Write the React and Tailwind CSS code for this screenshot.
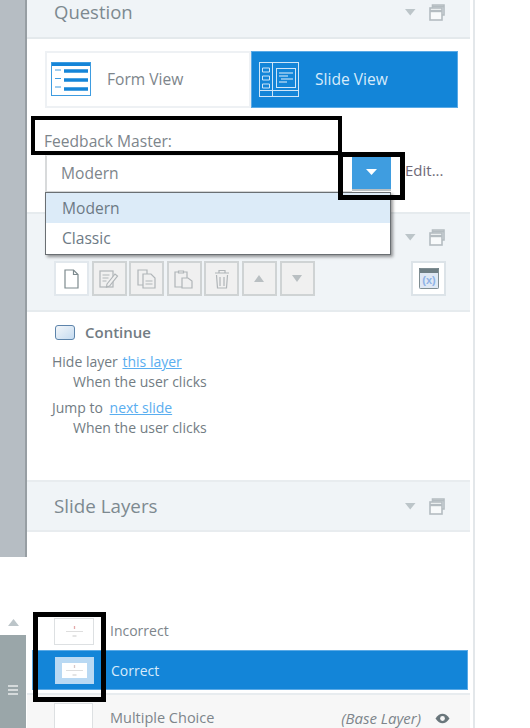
const font = { fontFamily: '"Open Sans", "Noto Sans", sans-serif' };

function HeaderIcons() {
  return (
    <div className="flex items-center gap-[13px]">
      <svg width="11" height="7" viewBox="0 0 11 7"><path d="M0 0h10.5L5.2 6.5z" fill="#bcc5c9" /></svg>
      <svg width="16" height="17" viewBox="0 0 16 17" fill="none" stroke="#b4bcc1" strokeWidth="1.6">
        <path d="M3.5 4V1h11.5v10H13" />
        <rect x="1" y="4" width="12" height="12" fill="#f8fafb" />
        <path d="M1 7h12" strokeWidth="2.4" />
        <path d="M3.5 2.5h11.5" strokeWidth="2" />
      </svg>
    </div>
  );
}

function FormIcon() {
  return (
    <svg width="41" height="35" viewBox="0 0 41 35" fill="none">
      <rect x="0.5" y="0.5" width="39" height="33" stroke="#3e9ce0" fill="#fff" />
      <rect x="1" y="1" width="38" height="3" fill="#1585d8" />
      <path d="M4 8h6M4 16.5h6M4 25h6" stroke="#3e9ce0" strokeWidth="1" />
      <path d="M13 9h24M13 18h24M13 27h24" stroke="#1585d8" strokeWidth="3.4" />
    </svg>
  );
}

function SlideIcon() {
  return (
    <svg width="41" height="35" viewBox="0 0 41 35" fill="none" stroke="#cfe6f8" strokeWidth="1">
      <rect x="0.5" y="0.5" width="39" height="34" />
      <path d="M13.5 0.5v34M0.5 28.5h39" />
      <path d="M3.5 6h7v4h-7zM3.5 14h7v4h-7zM3.5 22h7v4h-7z" />
      <rect x="17.5" y="6.5" width="19" height="19" />
      <path d="M20 11h14M20 14h9M22 17h12M20 20h8" stroke="#e6f2fc" />
    </svg>
  );
}

function ToolBtn({ children, white }) {
  return (
    <div className={`w-[35px] h-[35px] flex items-center justify-center border-2 ${white ? 'bg-white border-[#e2e8ed]' : 'bg-[#f0f0f0] border-[#cfd3d4]'}`}>
      {children}
    </div>
  );
}

const Stroke = { fill: 'none', stroke: '#b0b5b8', strokeWidth: 1.2 };

function ThumbArt({ active }) {
  return (
    <svg width="25" height="15" viewBox="0 0 25 15">
      <rect width="25" height="15" fill={active ? '#fff' : 'transparent'} />
      <path d="M4 7.5h17" stroke="#dedede" strokeWidth="1" />
      <path d="M12.5 2v3" stroke={active ? '#d8c7c7' : '#e3a9a9'} strokeWidth="1.3" />
      <path d="M10.5 12h4" stroke="#d6d6d6" strokeWidth="1.3" />
    </svg>
  );
}

export default function App() {
  return (
    <div style={font} className="w-[530px] h-[728px] overflow-hidden bg-white flex relative text-[#69757d]">
      {/* left rail */}
      <div className="w-[27px] h-full flex flex-col shrink-0">
        <div className="h-[557px] shrink-0 bg-[#b6bdc3] border-r-2 border-[#979ea3]" />
        <div className="h-[53px] shrink-0 bg-white" />
        <div className="h-[25px] shrink-0 w-[26px] bg-white flex items-center justify-center">
          <svg width="11" height="7" viewBox="0 0 11 7"><path d="M5.5 0L11 7H0z" fill="#bcc5c9" /></svg>
        </div>
        <div className="flex-1 w-[26px] bg-[#9aa6a9] flex items-center justify-center">
          <div className="flex flex-col gap-[2px] mb-[-16px]">
            <div className="w-[10px] h-[2px] bg-[#d5dadb]" />
            <div className="w-[10px] h-[2px] bg-[#d5dadb]" />
            <div className="w-[10px] h-[2px] bg-[#d5dadb]" />
          </div>
        </div>
      </div>

      {/* main panel */}
      <div className="w-[443px] h-full flex flex-col shrink-0">
        <div className="h-[39px] shrink-0 bg-[#f0f4f7] border-b-2 border-[#e4e9ec] flex items-start justify-between pl-[27px] pr-[25px]">
          <span className="text-[18.5px] leading-[24px] text-[#7d8990]">Question</span>
          <div className="pt-[4px]"><HeaderIcons /></div>
        </div>

        <div className="h-[173px] shrink-0 flex flex-col pl-[18px] pr-[12px] pt-[12px]">
          <div className="flex h-[57px] w-[413px] shrink-0">
            <div className="w-[206px] border-2 border-[#eef1f4] flex items-center pl-[4px] gap-[15px]">
              <FormIcon />
              <span className="text-[15.6px] text-[#7d858b]">Form View</span>
            </div>
            <div className="w-[207px] bg-[#1385d8] border border-[#5aaae6] flex items-center pl-[7px] gap-[15px]">
              <SlideIcon />
              <span className="text-[15.6px] text-[#d7ebfb]">Slide View</span>
            </div>
          </div>
          <div className="text-[15.6px] leading-[20px] text-[#7d858b] mt-[23px] -ml-[1px]">Feedback Master:</div>
          <div className="flex mt-[4px] h-[38px] items-start shrink-0">
            <div className="w-[307px] h-[38px] bg-white border-l-2 border-b-2 border-t border-[#d8dadb] border-t-[#eef0f1] pl-[14px] text-[15.6px] leading-[34px] text-[#7d858b]">Modern</div>
            <div className="w-[39px] h-[36px] bg-[#3f9de0] border-b-2 border-[#b9c0c4] flex items-center justify-center">
              <svg width="11" height="6" viewBox="0 0 11 6"><path d="M0 0h11L5.5 6z" fill="#fff" /></svg>
            </div>
            <span className="ml-[14px] text-[15px] leading-[30px] text-[#6f6a78]">Edit...</span>
          </div>
        </div>

        {/* trigger toolbar */}
        <div className="h-[100px] shrink-0 bg-[#f0f4f7] border-y-2 border-[#e6ebee] flex flex-col px-[27px]">
          <div className="flex justify-end pt-[15px] -mr-[2px]"><HeaderIcons /></div>
          <div className="flex items-center justify-between mt-[15px] -mr-[3px]">
            <div className="flex gap-[2.6px]">
              <ToolBtn white>
                <svg width="15" height="20" viewBox="0 0 15 20" fill="#fff" stroke="#7d8a8e" strokeWidth="1.2"><path d="M1 1h8.5L14 5.5V19H1z" /><path d="M9.5 1v4.5H14" fill="none" /></svg>
              </ToolBtn>
              <ToolBtn>
                <svg width="20" height="20" viewBox="0 0 20 20" {...Stroke}><rect x="1" y="2" width="13" height="16" /><path d="M3.5 6h7M3.5 9h6M3.5 12h4" /><path d="M8 15l8-10 2.5 2-8 10-3 1z" fill="#f0f0f0" /></svg>
              </ToolBtn>
              <ToolBtn>
                <svg width="20" height="20" viewBox="0 0 20 20" {...Stroke}><path d="M1 1h9v15H1z" /><path d="M6 5h8l4 4v10H6z" fill="#f0f0f0" /><path d="M8.5 12h7M8.5 15h7" /></svg>
              </ToolBtn>
              <ToolBtn>
                <svg width="20" height="20" viewBox="0 0 20 20" {...Stroke}><path d="M1 3h12v15H1z" /><path d="M4.5 4V2h5v2z" fill="#f0f0f0" /><path d="M8 9h6l4 3v7H8z" fill="#f0f0f0" /></svg>
              </ToolBtn>
              <ToolBtn>
                <svg width="18" height="20" viewBox="0 0 18 20" {...Stroke}><path d="M2 4h14M6 4V1.5h6V4" /><path d="M3.5 6l1 13h9l1-13" /><path d="M7 8v9M11 8v9" /></svg>
              </ToolBtn>
              <ToolBtn>
                <svg width="10" height="7" viewBox="0 0 10 7"><path d="M5 0l5 7H0z" fill="#b9bfc2" /></svg>
              </ToolBtn>
              <ToolBtn>
                <svg width="10" height="7" viewBox="0 0 10 7"><path d="M0 0h10L5 7z" fill="#b9bfc2" /></svg>
              </ToolBtn>
            </div>
            <div className="w-[35px] h-[35px] bg-white border-2 border-[#dce3e8] flex items-center justify-center">
              <svg width="20" height="21" viewBox="0 0 20 21">
                <rect width="20" height="21" rx="1" fill="#dfe8f4" />
                <rect width="20" height="5" fill="#6e7e84" />
                <rect x="0.5" y="0.5" width="19" height="20" rx="1" fill="none" stroke="#7f8d92" />
                <text x="10" y="16" textAnchor="middle" fontSize="11" fontWeight="700" fill="#8eb2e6" fontFamily="'Liberation Sans', sans-serif">(x)</text>
              </svg>
            </div>
          </div>
        </div>

        {/* trigger list */}
        <div className="h-[168px] shrink-0 pl-[25px] text-[14px] leading-[20px] text-[#727c83]">
          <div className="flex items-center gap-[10px] pt-[10px] pb-[10px] pl-[3px]">
            <div className="w-[20px] h-[15px] rounded-[3px] border-[1.5px] border-[#5d84ab] bg-gradient-to-br from-[#f3f6f9] to-[#c5dbf0]" />
            <span className="text-[15px] font-semibold text-[#727c83]">Continue</span>
          </div>
          <div>Hide layer <span className="ml-[1px] text-[#5aaef0] underline">this layer</span></div>
          <div className="pl-[21px]">When the user clicks</div>
          <div className="mt-[6px]">Jump to <span className="ml-[3px] text-[#5aaef0] underline">next slide</span></div>
          <div className="pl-[21px]">When the user clicks</div>
        </div>

        {/* Slide Layers */}
        <div className="h-[52px] shrink-0 bg-[#f0f4f7] border-y-2 border-[#e8ecef] flex items-center justify-between pl-[27px] pr-[25px]">
          <span className="text-[18.8px] text-[#7d8990]">Slide Layers</span>
          <HeaderIcons />
        </div>

        <div className="flex-1 min-h-0 flex flex-col pt-[80px]">
          <div className="h-[38px] shrink-0 flex items-center pl-[27px] gap-[16px]">
            <div className="w-[40px] h-[27px] bg-white border border-[#dde0e2] flex items-center justify-center"><ThumbArt /></div>
            <span className="text-[14px] text-[#7d858b] mb-[2px]">Incorrect</span>
          </div>
          <div className="h-[40px] shrink-0 ml-[5px] mr-[2px] bg-[#1385d8] border border-[#5aaae6] flex items-center pl-[22px] gap-[17px]">
            <div className="w-[39px] h-[27px] bg-[#b9d9f3] flex items-center justify-center"><ThumbArt active /></div>
            <span className="text-[14px] text-[#d7ebfb]">Correct</span>
          </div>
          <div className="flex-1 mt-[3px] bg-[#f7f7f7] border-t-2 border-[#e8ecef] flex items-start pl-[27px] pr-[20px] pt-[8px] gap-[17px]">
            <div className="w-[39px] h-[31px] shrink-0 bg-white border border-[#dde0e2]" />
            <span className="text-[14.5px] leading-[30px] text-[#7d858b]">Multiple Choice</span>
            <span className="ml-auto text-[15px] leading-[30px] italic text-[#7d858b]">(Base Layer)</span>
            <svg className="mt-[10px] -ml-[3px]" width="15" height="11" viewBox="0 0 15 11">
              <path d="M0.5 5.5C3 2 5 .8 7.5.8S12 2 14.5 5.5C12 9 10 10.2 7.5 10.2S3 9 .5 5.5z" fill="#69767b" />
              <circle cx="7.5" cy="5.5" r="2.4" fill="#f7f7f7" />
            </svg>
          </div>
        </div>
      </div>

      <div className="w-[3px] h-full shrink-0" />
      <div className="w-[2px] h-full bg-[#e3e7ea] shrink-0" />

      {/* dropdown menu */}
      <div className="absolute left-[45px] top-[192px] w-[346px] h-[63px] bg-white border-[1.5px] border-[#6a6f73] shadow-[2px_2px_3px_rgba(0,0,0,0.4)] text-[15.6px] text-[#6d7a85]">
        <div className="h-[30px] bg-[#dcebf8] pl-[16px] leading-[30px]">Modern</div>
        <div className="h-[30px] pl-[16px] leading-[30px]">Classic</div>
      </div>

      {/* black annotation rectangles */}
      <div className="absolute left-[31px] top-[116px] w-[311px] h-[39px] border-[4px] border-black" />
      <div className="absolute left-[338px] top-[152px] w-[67px] h-[48px] border-[5px] border-black" />
      <div className="absolute left-[33px] top-[612px] w-[73px] h-[90px] border-[5px] border-black" />
    </div>
  );
}
